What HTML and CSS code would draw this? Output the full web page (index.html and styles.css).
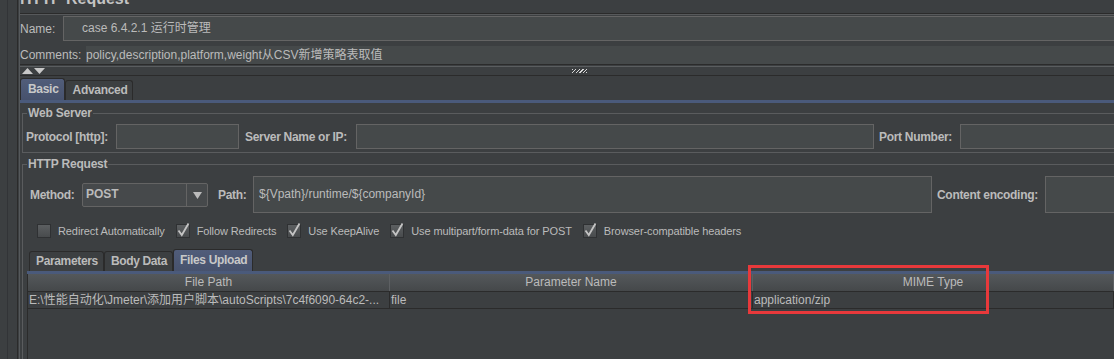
FILE: index.html
```html
<!DOCTYPE html>
<html>
<head>
<meta charset="utf-8">
<link rel="stylesheet" href="styles.css">
</head>
<body>
<div class="window">
  <div class="side"><div class="side-line"></div></div>
  <div class="main">
    <div class="title"><span class="title-text">HTTP Request</span></div>
    <div class="namepanel">
      <div class="name-row">
        <span class="name-lbl">Name:</span>
        <div class="field name-field">case 6.4.2.1 运行时管理</div>
      </div>
      <div class="comments-row">
        <span class="comments-lbl">Comments:</span>
        <div class="comments-field">policy,description,platform,weight从CSV新增策略表取值</div>
      </div>
    </div>
    <div class="splitter">
      <svg class="arrows" width="24" height="6" viewBox="0 0 24 6"><polygon points="0,6 5.5,0 11,6" fill="#c8c8c8"/><polygon points="12,0 23,0 17.5,6" fill="#c8c8c8"/></svg>
      <div class="grip"></div>
    </div>
    <div class="tabs">
      <div class="tab tab-sel">Basic</div>
      <div class="tab">Advanced</div>
    </div>
    <div class="tabline"></div>
    <fieldset class="group ws">
      <legend>Web Server</legend>
      <div class="ws-row">
        <span class="lbl lbl-proto">Protocol [http]:</span>
        <div class="field f-proto"></div>
        <span class="lbl lbl-server">Server Name or IP:</span>
        <div class="field f-server"></div>
        <span class="lbl lbl-port">Port Number:</span>
        <div class="field f-port"></div>
      </div>
    </fieldset>
    <fieldset class="group hr">
      <legend>HTTP Request</legend>
      <div class="method-row">
        <span class="lbl lbl-method">Method:</span>
        <div class="combo">
          <span class="combo-text">POST</span>
          <span class="combo-btn"><svg width="9" height="7" viewBox="0 0 9 7"><polygon points="0,0 9,0 4.5,7" fill="#bbbbbb"/></svg></span>
        </div>
        <span class="lbl lbl-path">Path:</span>
        <div class="field f-path">${Vpath}/runtime/${companyId}</div>
        <span class="lbl lbl-enc">Content encoding:</span>
        <div class="field f-enc"></div>
      </div>
      <div class="checks">
        <div class="check"><span class="cb"></span><span>Redirect Automatically</span></div>
        <div class="check"><span class="cb"><svg width="12" height="12" viewBox="0 0 12 12"><path d="M1.5 5.5 L4.8 10 L11.5 -1.5" fill="none" stroke="#c4c4c4" stroke-width="1.8"/></svg></span><span>Follow Redirects</span></div>
        <div class="check"><span class="cb"><svg width="12" height="12" viewBox="0 0 12 12"><path d="M1.5 5.5 L4.8 10 L11.5 -1.5" fill="none" stroke="#c4c4c4" stroke-width="1.8"/></svg></span><span>Use KeepAlive</span></div>
        <div class="check"><span class="cb"><svg width="12" height="12" viewBox="0 0 12 12"><path d="M1.5 5.5 L4.8 10 L11.5 -1.5" fill="none" stroke="#c4c4c4" stroke-width="1.8"/></svg></span><span>Use multipart/form-data for POST</span></div>
        <div class="check"><span class="cb"><svg width="12" height="12" viewBox="0 0 12 12"><path d="M1.5 5.5 L4.8 10 L11.5 -1.5" fill="none" stroke="#c4c4c4" stroke-width="1.8"/></svg></span><span>Browser-compatible headers</span></div>
      </div>
      <div class="lower">
        <div class="subtabs">
          <div class="tab">Parameters</div>
          <div class="tab">Body Data</div>
          <div class="tab tab-sel">Files Upload</div>
        </div>
        <div class="tabline"></div>
        <div class="table">
          <div class="thead">
            <div class="th c1">File Path</div>
            <div class="th c2">Parameter Name</div>
            <div class="th c3">MIME Type</div>
          </div>
          <div class="tr">
            <div class="td c1">E:\性能自动化\Jmeter\添加用户脚本\autoScripts\7c4f6090-64c2-...</div>
            <div class="td c2">file</div>
            <div class="td c3">application/zip</div>
          </div>
        </div>
      </div>
    </fieldset>
  </div>
</div>
<div class="annot"></div>
</body>
</html>
```
FILE: styles.css
```css
* { box-sizing: border-box; }
html, body { margin: 0; padding: 0; }
body {
  background: #3c3f41;
  width: 1114px;
  height: 359px;
  overflow: hidden;
  position: relative;
  font-family: "Liberation Sans", "Noto Sans CJK SC", sans-serif;
  font-size: 12px;
  color: #bbbbbb;
}
.window { display: flex; width: 1180px; height: 359px; }
.side { width: 18px; flex: none; border-right: 1px solid #2b2b2b; display: flex; }
.side-line { width: 8px; border-right: 1px solid #323437; }
.main { flex: 1; min-width: 0; margin-left: 1px; border-left: 1px solid #56595b; }

.title { height: 14px; overflow: hidden; border-bottom: 1px solid #2b2b2b; }
.title-text { display: block; font-weight: bold; font-size: 16px; line-height: 18px; margin-top: -10px; color: #c4c4c4; }

.namepanel { border-top: 1px solid #57595b; padding-top: 1px; border-bottom: 1px solid #2b2b2b; }
.name-row { display: flex; align-items: center; height: 25px; }
.name-lbl { width: 43px; }
.field { background: #45494a; border: 1px solid #646464; }
.name-field { flex: 1; height: 25px; line-height: 23px; padding-left: 18px; }
.comments-row { display: flex; align-items: center; height: 18px; margin-top: 5px; }
.comments-lbl { width: 66px; }
.comments-field { flex: 1; height: 18px; line-height: 18px; background: #45494a; }

.splitter { margin-top: 1px; height: 10px; border-top: 1px solid #5a5d5f; border-bottom: 1px solid #2b2b2b; display: flex; align-items: center; padding-left: 2px; }
.arrows { display: block; }
.grip { margin-left: 526px; width: 15px; height: 4px; background: repeating-linear-gradient(135deg, #d8d8d8 0 1px, #3c3f41 1px 2.5px); }

.tabs { display: flex; align-items: flex-end; height: 24px; }
.tab {
  height: 20px;
  line-height: 19px;
  padding: 0 5px 0 7px;
  font-weight: bold;
  letter-spacing: -0.3px;
  border: 1px solid #2b2b2b;
  border-bottom: none;
  border-radius: 3px 3px 0 0;
  color: #bbbbbb;
}
.tab-sel { height: 22px; line-height: 20px; background: linear-gradient(#515d7a, #47526d); color: #c8c8c8; }
.tabline { height: 3px; background: #4a5a7b; }

.group { margin: 3px 0 0 2px; padding: 0; border: 1px solid #5a5c5e; min-inline-size: 0; }
.group legend { padding: 0 1px; margin-left: 4px; font-weight: bold; line-height: 14px; letter-spacing: -0.2px; color: #bbbbbb; }
.lbl { font-weight: bold; letter-spacing: -0.3px; white-space: nowrap; }

.ws-row { display: flex; align-items: center; padding: 4px 0 3px 3px; }
.ws-row .field { height: 25px; }
.lbl-proto { width: 90px; }
.f-proto { width: 123px; }
.lbl-server { width: 111px; margin-left: 6px; }
.f-server { width: 518px; }
.lbl-port { width: 81px; margin-left: 5px; }
.f-port { flex: 1; }

.hr { margin-top: 4px; min-height: 220px; border-bottom: none; }
.method-row { display: flex; align-items: center; padding: 5px 0 0 7px; height: 42px; }
.lbl-method { width: 52px; }
.combo { width: 126px; height: 24px; display: flex; background: #46494b; border: 1px solid #646464; border-radius: 2px; }
.combo-text { flex: 1; padding-left: 3px; line-height: 20px; font-weight: bold; }
.combo-btn { width: 21px; border-left: 1px solid #646464; display: flex; align-items: center; justify-content: center; }
.combo-btn svg { display: block; margin-top: 2px; }
.lbl-path { width: 35px; margin-left: 10px; }
.f-path { width: 679px; height: 37px; line-height: 35px; padding-left: 5px; }
.lbl-enc { width: 108px; margin-left: 5px; }
.f-enc { flex: 1; height: 37px; }

.checks { display: flex; gap: 11px; margin-top: 11px; padding-left: 14px; height: 14px; align-items: center; font-size: 11px; letter-spacing: -0.1px; }
.check { display: flex; align-items: center; gap: 7px; white-space: nowrap; }
.cb { width: 14px; height: 14px; border: 1px solid #2f3133; background: linear-gradient(#5c5f61, #484b4d); display: block; }
.cb svg { display: block; overflow: visible; }

.lower { margin-left: 4px; }
.subtabs { display: flex; align-items: flex-end; height: 22px; margin-top: 11px; padding-left: 2px; }
.subtabs .tab { padding: 0 5px 0 6px; letter-spacing: -0.35px; }
.table { width: 1087px; min-height: 90px; border-left: 1px solid #2b2b2b; }
.thead { display: flex; height: 18px; background: linear-gradient(#54585b, #45484a); border-bottom: 1px solid #2b2b2b; }
.th { text-align: center; line-height: 17px; border-right: 1px solid #5d6063; }
.tr { display: flex; height: 17px; border-bottom: 1px solid #2b2b2b; }
.td { line-height: 16px; padding-left: 1px; white-space: nowrap; overflow: hidden; border-right: 1px solid #2b2b2b; }
.c1 { width: 362px; }
.c2 { width: 363px; }
.c3 { flex: 1; }

.annot { position: absolute; left: 748px; top: 265px; width: 241px; height: 49px; border: 3px solid #e8393b; }
```
